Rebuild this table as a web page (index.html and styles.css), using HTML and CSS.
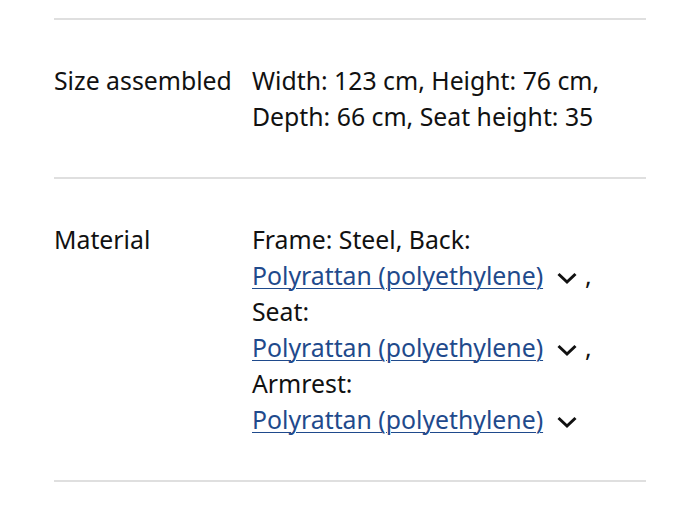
FILE: index.html
```html
<!DOCTYPE html>
<html lang="en">
<head>
    <meta charset="UTF-8">
    <meta name="viewport" content="width=device-width, initial-scale=1.0">
    <title>Product details</title>
    <link rel="stylesheet" href="styles.css">
</head>
<body>
    <!-- product specs -->
    <div class="specs">
        <div class="spec-row">
            <div class="spec-label">Size assembled</div>
            <div class="spec-value">Width: 123 cm, Height: 76 cm, Depth: 66 cm, Seat height: 35</div>
        </div>

        <div class="spec-row">
            <div class="spec-label">Material</div>
            <div class="spec-value">
                Frame: Steel, Back:<br>
                <a class="material-link" href="#">Polyrattan (polyethylene)</a><span class="chevron"><svg width="20" height="14" viewBox="0 0 20 14"><path d="M1.5 3 L10 11 L18.5 3" fill="none" stroke="#111" stroke-width="3"/></svg></span>,<br>
                Seat:<br>
                <a class="material-link" href="#">Polyrattan (polyethylene)</a><span class="chevron"><svg width="20" height="14" viewBox="0 0 20 14"><path d="M1.5 3 L10 11 L18.5 3" fill="none" stroke="#111" stroke-width="3"/></svg></span>,<br>
                Armrest:<br>
                <a class="material-link" href="#">Polyrattan (polyethylene)</a><span class="chevron"><svg width="20" height="14" viewBox="0 0 20 14"><path d="M1.5 3 L10 11 L18.5 3" fill="none" stroke="#111" stroke-width="3"/></svg></span>
            </div>
        </div>
    </div>
</body>
</html>
```

FILE: styles.css
```css
* {
    margin: 0;
    padding: 0;
    box-sizing: border-box;
}

body {
    background-color: #fff;
    color: #111;
    font-family: 'Noto Sans', 'Open Sans', sans-serif;
    font-size: 24.8px;
    line-height: 36px;
    padding: 18px 54px 0;
}

.specs {
    border-top: 2px solid #dfdfdf;
}

.spec-row {
    display: flex;
    padding: 42px 0 43px;
    border-bottom: 2px solid #dfdfdf;
}

.spec-label {
    width: 198px;
    flex-shrink: 0;
}

.spec-value {
    flex: 1;
    max-width: 370px;
}

.material-link {
    color: #1f4a8c;
    text-decoration: underline;
    text-decoration-thickness: 1px;
    text-underline-offset: 3px;
}

.chevron {
    display: inline-block;
    margin: 0 8px 0 14px;
    vertical-align: 0;
}

.chevron svg {
    display: block;
}
```
